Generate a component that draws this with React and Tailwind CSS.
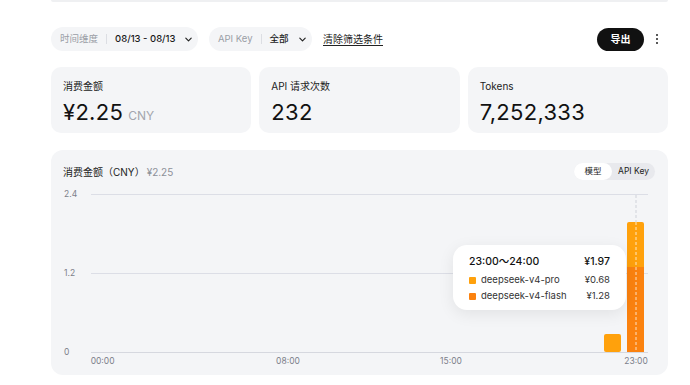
import React from "react";

const FONT = { fontFamily: 'Inter, "Noto Sans CJK SC", sans-serif' };

function Chevron() {
  return (
    <svg width="9" height="9" viewBox="0 0 10 10" fill="none">
      <path d="M2 3.5 L5 6.5 L8 3.5" stroke="#222" strokeWidth="1.3" strokeLinecap="round" strokeLinejoin="round" />
    </svg>
  );
}

function StatCard({ label, value, unit }) {
  return (
    <div className="flex-1 h-[66px] rounded-[10px] bg-[#f4f5f7] px-3 pt-[12px]">
      <div className="text-[10px] leading-[14px] text-[#222]">{label}</div>
      <div className="mt-[5px] flex items-baseline gap-[5px]">
        <span className="text-[22px] leading-[28px] text-[#111] tracking-[0.3px]">{value}</span>
        {unit && <span className="text-[12px] text-[#a3a6ad]">{unit}</span>}
      </div>
    </div>
  );
}

export default function App() {
  const xLabels = [
    { t: "00:00", x: 11.6 },
    { t: "08:00", x: 197 },
    { t: "15:00", x: 360 },
    { t: "23:00", x: 545 },
  ];
  return (
    <div className="w-[690px] h-[385px] bg-white overflow-hidden" style={FONT}>
      <div className="ml-[51px] w-[617px]">
        <div className="h-[2px] bg-[#eff0f2] rounded-b-[2px]" />

        {/* filter row */}
        <div className="mt-[25px] h-[24px] flex items-center whitespace-nowrap">
          <div className="shrink-0 h-[24px] w-[147px] rounded-full bg-[#f4f5f7] flex items-center pl-[9px] text-[9.5px]">
            <span className="text-[#9a9ea6]">时间维度</span>
            <span className="mx-[8px] h-[10px] w-px bg-[#dcdee3]" />
            <span className="text-[#1a1a1a] font-medium">08/13 - 08/13</span>
            <span className="ml-[8px]"><Chevron /></span>
          </div>
          <div className="shrink-0 ml-[11px] h-[24px] w-[103px] rounded-full bg-[#f4f5f7] flex items-center pl-[9px] text-[9.5px]">
            <span className="text-[#9a9ea6]">API Key</span>
            <span className="mx-[8px] h-[10px] w-px bg-[#dcdee3]" />
            <span className="text-[#1a1a1a] font-medium">全部</span>
            <span className="ml-[9px]"><Chevron /></span>
          </div>
          <span className="ml-[11px] text-[10px] text-[#222] underline underline-offset-2">清除筛选条件</span>
          <div className="flex-1" />
          <button className="h-[23px] w-[47px] rounded-full bg-[#111] text-white text-[10px] font-semibold">导出</button>
          <div className="ml-[10px] w-[6px] flex flex-col items-center gap-[2px]">
            <span className="w-[2px] h-[2px] rounded-full bg-[#222]" />
            <span className="w-[2px] h-[2px] rounded-full bg-[#222]" />
            <span className="w-[2px] h-[2px] rounded-full bg-[#222]" />
          </div>
          <div className="w-[8px]" />
        </div>

        {/* stat cards */}
        <div className="mt-[16px] flex gap-[8px]">
          <StatCard label="消费金额" value="¥2.25" unit="CNY" />
          <StatCard label="API 请求次数" value="232" />
          <StatCard label="Tokens" value="7,252,333" />
        </div>

        {/* chart card */}
        <div className="relative mt-[17px] h-[225px] rounded-[12px] bg-[#f4f5f7]">
          <div className="flex items-center justify-between pl-3 pr-[13px] pt-[13px]">
            <div className="text-[10px] leading-[16px]">
              <span className="text-[#222]">消费金额（CNY）</span>
              <span className="ml-[2px] text-[#8d9199]">¥2.25</span>
            </div>
            <div className="flex h-[17px] rounded-full bg-[#e8e9ed] text-[8.5px] text-[#222]">
              <span className="w-[38px] rounded-full bg-white flex items-center justify-center">模型</span>
              <span className="px-[6px] flex items-center">API Key</span>
            </div>
          </div>

          <div className="mt-[9px] flex">
            <div className="w-[40px] h-[168px] flex flex-col justify-between pl-[13px] text-[8.5px] leading-[10px] text-[#7c808a]">
              <span>2.4</span>
              <span>1.2</span>
              <span>0</span>
            </div>
            <div className="mt-[5px]">
              <svg width="557" height="159" viewBox="0 0 557 159">
                <line x1="0" y1="0.5" x2="557" y2="0.5" stroke="#dcdee6" />
                <line x1="0" y1="79.5" x2="557" y2="79.5" stroke="#dcdee6" />
                <rect x="513" y="140" width="17" height="18" rx="2" fill="#ffa10c" />
                <path d="M536 30 a2 2 0 0 1 2 -2 h13 a2 2 0 0 1 2 2 V73 H536 Z" fill="#ffa10c" />
                <rect x="536" y="73" width="17" height="85" fill="#fb820f" />
                <line x1="545" y1="1" x2="545" y2="28" stroke="#cfd2d9" strokeDasharray="3 2" />
                <line x1="545" y1="28" x2="545" y2="158" stroke="#fff" strokeOpacity="0.75" strokeDasharray="3 2" />
                <line x1="0" y1="158.5" x2="557" y2="158.5" stroke="#d6d8df" />
              </svg>
              <div className="relative h-[14px] text-[8.5px] text-[#7c808a]">
                {xLabels.map((l) => (
                  <span
                    key={l.t}
                    className="absolute top-[2px] -translate-x-1/2"
                    style={{ left: l.x }}
                  >
                    {l.t}
                  </span>
                ))}
              </div>
            </div>
          </div>

          {/* tooltip */}
          <div className="absolute left-[402px] top-[95px] w-[173px] h-[65px] rounded-[14px] bg-white shadow-[0_4px_16px_rgba(0,0,0,0.08)] px-[16px] pt-[9px]">
            <div className="flex justify-between text-[10.5px] leading-[15px] text-[#111] font-medium">
              <span>23:00～24:00</span>
              <span>¥1.97</span>
            </div>
            <div className="mt-[3px] flex items-center justify-between text-[9.5px] leading-[16px] text-[#333]">
              <span className="flex items-center gap-[5px]">
                <span className="w-[7px] h-[7px] rounded-[1px] bg-[#ffa10c]" />
                deepseek-v4-pro
              </span>
              <span>¥0.68</span>
            </div>
            <div className="flex items-center justify-between text-[9.5px] leading-[16px] text-[#333]">
              <span className="flex items-center gap-[5px]">
                <span className="w-[7px] h-[7px] rounded-[1px] bg-[#fb820f]" />
                deepseek-v4-flash
              </span>
              <span>¥1.28</span>
            </div>
          </div>
        </div>
      </div>
    </div>
  );
}
